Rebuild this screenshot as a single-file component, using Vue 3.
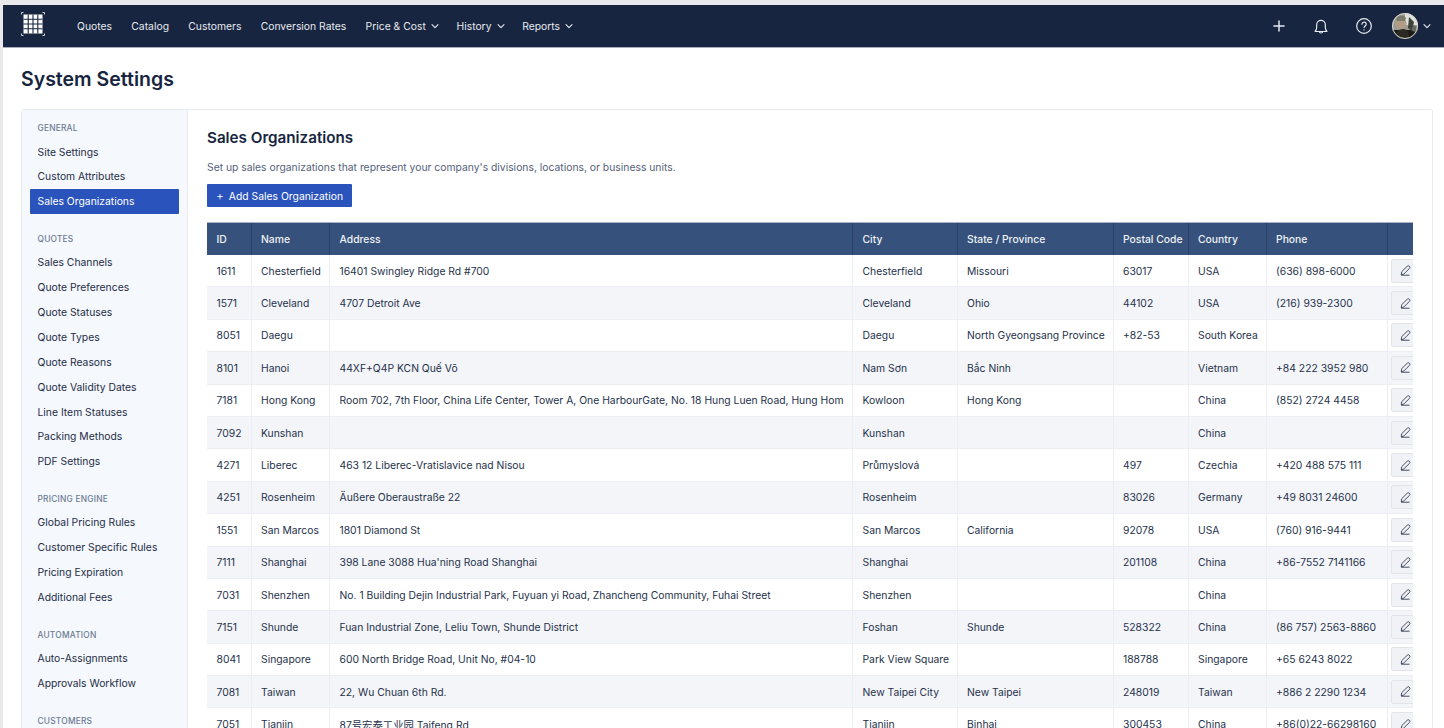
<template>
  <div class="page">
    <!-- TOP NAV -->
    <header class="topbar">
      <svg class="logo" viewBox="0 0 24 24" fill="none">
        <rect x="2.5" y="2.5" width="19" height="19" fill="#fff" />
        <path d="M7.2 2.5v19M12 2.5v19M16.8 2.5v19M2.5 7.2h19M2.5 12h19M2.5 16.8h19" stroke="#172540" stroke-width="1.1" />
        <path d="M.5 2.5v-2h2M21.5.5h2v2M23.5 21.5v2h-2M2.5 23.5h-2v-2" stroke="#cfd3da" stroke-width="1" />
      </svg>
      <nav class="nav">
        <a v-for="item in navItems" :key="item.label" class="nav-link" :class="{ 'has-caret': item.caret }">
          {{ item.label }}
          <svg v-if="item.caret" class="caret" viewBox="0 0 10 10" fill="none">
            <path d="M2 3.6l3 3 3-3" stroke="currentColor" stroke-width="1.1" stroke-linecap="round" stroke-linejoin="round" />
          </svg>
        </a>
      </nav>
      <div class="top-actions">
        <svg class="top-icon" viewBox="0 0 24 24" fill="none" stroke="currentColor" stroke-width="1.6" stroke-linecap="round">
          <path d="M12 6.5v11M6.5 12h11" />
        </svg>
        <svg class="top-icon" viewBox="0 0 24 24" fill="none" stroke="currentColor" stroke-width="1.3" stroke-linecap="round" stroke-linejoin="round">
          <path d="M5.6 18c1.1-1.3 1.7-2.6 1.7-4.6v-2.9a4.7 4.7 0 019.4 0v2.9c0 2 .6 3.3 1.7 4.6z" />
          <path d="M10 18.2a2.1 2.1 0 004 0" />
        </svg>
        <svg class="top-icon" viewBox="0 0 24 24" fill="none" stroke="currentColor" stroke-width="1.3" stroke-linecap="round" stroke-linejoin="round">
          <circle cx="12" cy="12" r="8" />
          <path d="M9.8 10a2.3 2.3 0 114 1.5c-.8.7-1.7 1.1-1.7 2.2M12 16.2v.1" />
        </svg>
        <div class="avatar-wrap">
          <svg class="avatar" viewBox="0 0 26 26">
            <defs>
              <clipPath id="avatar-clip"><circle cx="13" cy="13" r="13" /></clipPath>
              <filter id="avatar-blur"><feGaussianBlur stdDeviation="0.7" /></filter>
            </defs>
            <g clip-path="url(#avatar-clip)">
              <rect width="26" height="26" fill="#9a9b92" />
              <g filter="url(#avatar-blur)">
                <rect x="13" y="-1" width="14" height="13" fill="#dfe2de" />
                <rect x="-1" y="17" width="28" height="10" fill="#1d1c16" />
                <circle cx="9" cy="10.5" r="5.5" fill="#b19c86" />
                <path d="M4 4c3-2 8-2 10 1l-1 3H5z" fill="#7d7a6e" />
                <path d="M3 26c0-6 3-10 8-10s6 4 6 10z" fill="#2a2922" />
                <path d="M17 4l5 5-2 9-4-3z" fill="#3d423a" />
                <path d="M21 12l4 2-1 5-4-1z" fill="#66695f" />
              </g>
            </g>
            <circle cx="13" cy="13" r="12.5" fill="none" stroke="#d8d8d2" />
          </svg>
          <svg class="caret" viewBox="0 0 10 10" fill="none">
            <path d="M2 3.6l3 3 3-3" stroke="currentColor" stroke-width="1.1" stroke-linecap="round" stroke-linejoin="round" />
          </svg>
        </div>
      </div>
    </header>

    <main class="content">
      <h1 class="page-title">System Settings</h1>

      <div class="panel">
        <!-- SIDEBAR -->
        <aside class="sidebar">
          <section v-for="group in sideGroups" :key="group.title" class="side-group">
            <h3 class="side-title">{{ group.title }}</h3>
            <a
              v-for="link in group.links"
              :key="link"
              class="side-link"
              :class="{ active: link === 'Sales Organizations' }"
            >{{ link }}</a>
          </section>
        </aside>

        <!-- MAIN -->
        <section class="main">
          <h2 class="main-title">Sales Organizations</h2>
          <p class="main-desc">Set up sales organizations that represent your company's divisions, locations, or business units.</p>
          <button class="btn-add"><span class="plus">+</span>Add Sales Organization</button>

          <div class="table-wrap">
            <table class="orgs">
              <colgroup>
                <col v-for="w in colWidths" :key="w.key" :style="{ width: w.px + 'px' }" />
              </colgroup>
              <thead>
                <tr>
                  <th>ID</th><th>Name</th><th>Address</th><th>City</th><th>State / Province</th>
                  <th>Postal Code</th><th>Country</th><th>Phone</th><th></th>
                </tr>
              </thead>
              <tbody>
                <tr v-for="row in rows" :key="row[0]">
                  <td v-for="(cell, i) in row" :key="i">{{ cell }}</td>
                  <td class="cell-edit">
                    <button class="btn-edit">
                      <svg viewBox="0 0 16 16" fill="none" stroke="currentColor" stroke-width="1.1" stroke-linecap="round" stroke-linejoin="round">
                        <path d="M2.8 12.6l.6-3.2 6.7-6.6a1.9 1.9 0 012.7 2.7l-6.7 6.6z" />
                        <path d="M3 13.8h9.5" />
                      </svg>
                    </button>
                  </td>
                </tr>
              </tbody>
            </table>
          </div>
        </section>
      </div>
    </main>
  </div>
</template>

<script setup>
const navItems = [
  { label: 'Quotes' },
  { label: 'Catalog' },
  { label: 'Customers' },
  { label: 'Conversion Rates' },
  { label: 'Price & Cost', caret: true },
  { label: 'History', caret: true },
  { label: 'Reports', caret: true }
]

const sideGroups = [
  { title: 'GENERAL', links: ['Site Settings', 'Custom Attributes', 'Sales Organizations'] },
  {
    title: 'QUOTES',
    links: ['Sales Channels', 'Quote Preferences', 'Quote Statuses', 'Quote Types', 'Quote Reasons', 'Quote Validity Dates', 'Line Item Statuses', 'Packing Methods', 'PDF Settings']
  },
  { title: 'PRICING ENGINE', links: ['Global Pricing Rules', 'Customer Specific Rules', 'Pricing Expiration', 'Additional Fees'] },
  { title: 'AUTOMATION', links: ['Auto-Assignments', 'Approvals Workflow'] },
  { title: 'CUSTOMERS', links: [] }
]

const colWidths = [
  { key: 'id', px: 44 },
  { key: 'name', px: 78.5 },
  { key: 'address', px: 523 },
  { key: 'city', px: 104.5 },
  { key: 'state', px: 156 },
  { key: 'postal', px: 75 },
  { key: 'country', px: 78 },
  { key: 'phone', px: 121 },
  { key: 'edit', px: 40 }
]

const rows = [
  ['1611', 'Chesterfield', '16401 Swingley Ridge Rd #700', 'Chesterfield', 'Missouri', '63017', 'USA', '(636) 898-6000'],
  ['1571', 'Cleveland', '4707 Detroit Ave', 'Cleveland', 'Ohio', '44102', 'USA', '(216) 939-2300'],
  ['8051', 'Daegu', '', 'Daegu', 'North Gyeongsang Province', '+82-53', 'South Korea', ''],
  ['8101', 'Hanoi', '44XF+Q4P KCN Quế Võ', 'Nam Sơn', 'Bắc Ninh', '', 'Vietnam', '+84 222 3952 980'],
  ['7181', 'Hong Kong', 'Room 702, 7th Floor, China Life Center, Tower A, One HarbourGate, No. 18 Hung Luen Road, Hung Hom', 'Kowloon', 'Hong Kong', '', 'China', '(852) 2724 4458'],
  ['7092', 'Kunshan', '', 'Kunshan', '', '', 'China', ''],
  ['4271', 'Liberec', '463 12 Liberec-Vratislavice nad Nisou', 'Průmyslová', '', '497', 'Czechia', '+420 488 575 111'],
  ['4251', 'Rosenheim', 'Äußere Oberaustraße 22', 'Rosenheim', '', '83026', 'Germany', '+49 8031 24600'],
  ['1551', 'San Marcos', '1801 Diamond St', 'San Marcos', 'California', '92078', 'USA', '(760) 916-9441'],
  ['7111', 'Shanghai', "398 Lane 3088 Hua'ning Road Shanghai", 'Shanghai', '', '201108', 'China', '+86-7552 7141166'],
  ['7031', 'Shenzhen', 'No. 1 Building Dejin Industrial Park, Fuyuan yi Road, Zhancheng Community, Fuhai Street', 'Shenzhen', '', '', 'China', ''],
  ['7151', 'Shunde', 'Fuan Industrial Zone, Leliu Town, Shunde District', 'Foshan', 'Shunde', '528322', 'China', '(86 757) 2563-8860'],
  ['8041', 'Singapore', '600 North Bridge Road, Unit No, #04-10', 'Park View Square', '', '188788', 'Singapore', '+65 6243 8022'],
  ['7081', 'Taiwan', '22, Wu Chuan 6th Rd.', 'New Taipei City', 'New Taipei', '248019', 'Taiwan', '+886 2 2290 1234'],
  ['7051', 'Tianjin', '87号宏泰工业园 Taifeng Rd', 'Tianjin', 'Binhai', '300453', 'China', '+86(0)22-66298160']
]
</script>

<style>
html, body { margin: 0; height: 100%; overflow: hidden; background: #e9e9eb; }
</style>

<style scoped>
.page {
  height: 728px;
  overflow: hidden;
  padding: 5px 0 0 3px;
  box-sizing: border-box;
  font-family: Inter, 'Noto Sans CJK SC', sans-serif;
  font-size: 10.35px;
  color: #1b2a44;
  -webkit-font-smoothing: antialiased;
}

/* Top nav */
.topbar {
  display: flex;
  align-items: center;
  height: 42px;
  background: #172540;
  color: #e6e9ef;
  padding: 0 12px 0 18px;
  border-bottom: 1px solid #a9afba;
  box-sizing: content-box;
}
.logo { width: 24px; height: 24px; flex-shrink: 0; margin-top: -4px; }
.nav { display: flex; align-items: center; margin-left: 32px; gap: 19.3px; }
.nav-link { display: inline-flex; align-items: center; gap: 4px; white-space: nowrap; }
.nav-link.has-caret { margin-right: -2.6px; }
.caret { width: 10px; height: 10px; }
.top-actions { margin-left: auto; display: flex; align-items: center; gap: 20.5px; }
.top-icon { width: 22px; height: 22px; }
.avatar-wrap { display: flex; align-items: center; gap: 4px; margin-left: -3px; }
.avatar { width: 26px; height: 26px; }

/* Page */
.content { background: #fff; height: 100%; padding: 0 11px 0 18px; }
.page-title {
  font-size: 19.5px;
  font-weight: 600;
  line-height: 24px;
  margin: 0;
  padding: 19px 0 18px;
  color: #172540;
}
.panel {
  display: flex;
  border: 1px solid #e8eaee;
  border-radius: 3px;
  height: 640px;
  overflow: hidden;
}

/* Sidebar */
.sidebar {
  width: 150px;
  flex-shrink: 0;
  background: #f5f8fd;
  border-right: 1px solid #e8eaee;
  padding: 12.4px 7.5px 0 7.5px;
}
.side-group { margin-bottom: 19.2px; }
.side-title {
  font-size: 8.4px;
  font-weight: 500;
  line-height: 12px;
  letter-spacing: 0.2px;
  color: #6d7b92;
  margin: 0 0 5.2px;
  padding-left: 8px;
}
.side-link {
  display: block;
  height: 24.85px;
  line-height: 24.85px;
  padding-left: 8px;
  border-radius: 1px;
  color: #1f2d47;
  white-space: nowrap;
}
.side-link.active { background: #2a54bc; color: #fff; margin-right: 0.5px; }

/* Main */
.main { flex: 1; min-width: 0; padding: 19px 19px 0 19px; }
.main-title { font-size: 15.2px; font-weight: 600; line-height: 18px; margin: 0; color: #172540; }
.main-desc { margin: 13px 0 0; line-height: 14px; color: #56617a; }
.btn-add {
  display: block;
  height: 23px;
  margin: 10px 0 0;
  padding: 0 9px;
  border: 0;
  border-radius: 1px;
  background: #2a54bc;
  color: #fff;
  font: inherit;
  white-space: nowrap;
}
.plus { margin-right: 5px; font-size: 12px; font-weight: 300; }

/* Table */
.table-wrap { margin-top: 15px; overflow: hidden; border-top: 1px solid #a9b3c4; }
.orgs { border-collapse: collapse; table-layout: fixed; width: 1220px; }
th {
  height: 32px;
  padding: 0 9.5px;
  background: #36527c;
  color: #eef1f6;
  font-weight: 500;
  text-align: left;
  border-right: 1px solid #2a4167;
  white-space: nowrap;
}
td {
  height: 31.4px;
  padding: 0 9.5px;
  border-right: 1px solid #eceef3;
  border-bottom: 1px solid #eceef3;
  color: #25324b;
  white-space: nowrap;
}
tbody tr:nth-child(even) td { background: #f4f5f9; }
.cell-edit { padding: 0 0 0 3px; }
.btn-edit {
  display: flex;
  align-items: center;
  justify-content: center;
  width: 30px;
  height: 24px;
  padding: 0;
  background: #f1f2f5;
  border: 1px solid #e2e4e9;
  border-radius: 2px;
  color: #2f3b55;
}
.btn-edit svg { width: 13px; height: 13px; }
</style>
